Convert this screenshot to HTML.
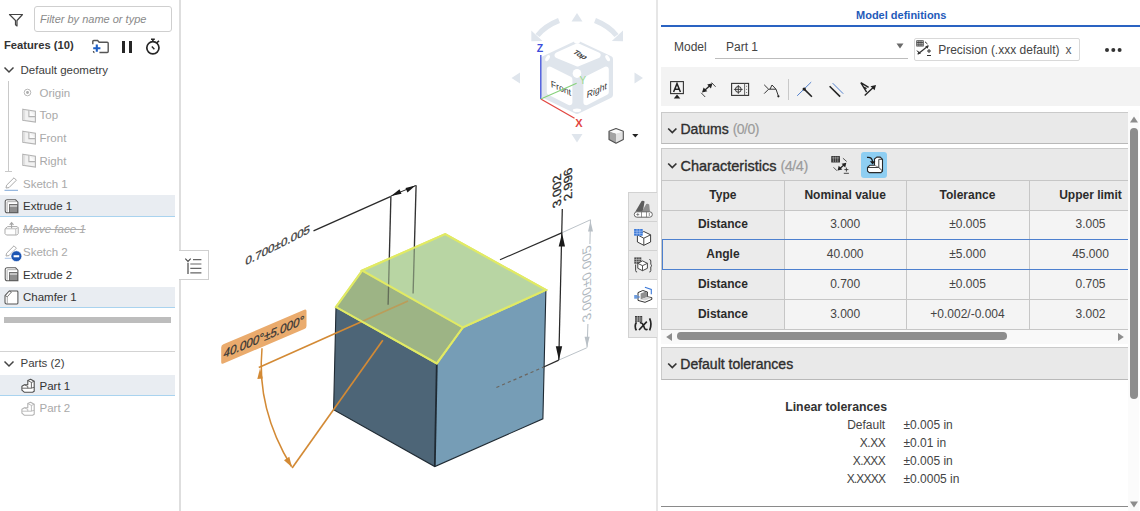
<!DOCTYPE html>
<html><head><meta charset="utf-8">
<style>
*{box-sizing:border-box}
html,body{margin:0;padding:0}
body{width:1140px;height:511px;position:relative;overflow:hidden;background:#fff;font-family:"Liberation Sans",sans-serif;color:#333}
.a{position:absolute}
.t{position:absolute;white-space:nowrap;line-height:1em}
.lp{font-size:11.5px}
.dis{color:#a9a9a9}
.hl{position:absolute;left:0;width:175px;background:#e9edf2;border-bottom:1px solid #a9d3ef}
svg{position:absolute;overflow:visible}
</style></head><body>

<!-- ============ VIEWPORT (full-page svg) ============ -->
<svg id="vp" class="a" style="left:0;top:0" width="1140" height="511" viewBox="0 0 1140 511">
<!-- model faces -->
<polygon points="336,307 436.8,363.4 434.8,466.6 333.6,409.8" fill="#4d6577"/>
<polygon points="436.8,363.4 462.8,327.5 545.9,290 542.9,418.8 434.8,466.6" fill="#769db6"/>
<polygon points="362.3,270.5 462.8,327.5 436.8,363.4 336,307" fill="#9db485"/>
<polygon points="362.3,270.5 445.2,234.1 545.9,290 462.8,327.5" fill="#b8d5a3"/>
<!-- dark edges -->
<polyline points="336,307 333.6,409.8 434.8,466.6 542.9,418.8 545.9,290" fill="none" stroke="#1f2a33" stroke-width="1.1"/>
<line x1="436.8" y1="363.4" x2="434.8" y2="466.6" stroke="#1f2a33" stroke-width="1.8"/>
<!-- yellow edges -->
<polygon points="362.3,270.5 445.2,234.1 545.9,290 462.8,327.5" fill="none" stroke="#e1ea64" stroke-width="2"/>
<polyline points="362.3,270.5 336,307 436.8,363.4 462.8,327.5" fill="none" stroke="#e1ea64" stroke-width="2"/>

<!-- 0.700 dimension -->
<line x1="313.5" y1="230.9" x2="390.4" y2="196.6" stroke="#2a2a2a" stroke-width="1.3"/>
<line x1="390.9" y1="196.3" x2="388.1" y2="304.8" stroke="#333" stroke-width="1.35"/>
<line x1="416.1" y1="185.3" x2="413.1" y2="293.6" stroke="#333" stroke-width="1.35"/>
<line x1="390.4" y1="196.3" x2="415.8" y2="185.5" stroke="#2a2a2a" stroke-width="1"/>
<polygon points="391,196 399.5,189.2 401.5,193.8" fill="#1a1a1a"/>
<polygon points="415.5,185.6 405.5,187.9 407.5,192.4" fill="#1a1a1a"/>
<text transform="matrix(0.91,-0.465,-0.06,0.9,245.2,265.6)" style="font-family:'Liberation Sans';font-size:12.8px;stroke:#3d3d3d;stroke-width:0.35px" fill="#3d3d3d">0.700±0.005</text>

<!-- 3.000 dimension (right) -->
<line x1="500" y1="259.8" x2="562.3" y2="232.6" stroke="#2a2a2a" stroke-width="1.2"/>
<line x1="562.3" y1="232.6" x2="590.7" y2="219.7" stroke="#bcc3c9" stroke-width="1"/>
<line x1="543.7" y1="367" x2="558.8" y2="360.1" stroke="#2a2a2a" stroke-width="1.3"/>
<line x1="558.8" y1="360.1" x2="586.8" y2="347.8" stroke="#bcc3c9" stroke-width="1"/>
<line x1="562.3" y1="209" x2="558.8" y2="360.1" stroke="#2a2a2a" stroke-width="1.25"/>
<polygon points="562.1,233.2 558.7,246.5 565,246.5" fill="#1a1a1a"/>
<polygon points="558.9,360 555.8,346.2 562.2,346.2" fill="#1a1a1a"/>
<line x1="496.4" y1="387.5" x2="543.7" y2="367" stroke="#6b6660" stroke-width="1.2" stroke-dasharray="3.2,3"/>
<text transform="matrix(0,-1,0.914,-0.407,561.2,205.6)" style="font-family:'Liberation Sans';font-size:13px;stroke:#2a2a2a;stroke-width:0.3px" fill="#2a2a2a">3.002</text>
<text transform="matrix(0,-1,0.914,-0.407,572,198.6)" style="font-family:'Liberation Sans';font-size:12.8px;stroke:#2a2a2a;stroke-width:0.3px" fill="#2a2a2a">2.996</text>
<!-- gray 3.000+-0.005 -->
<line x1="590.5" y1="220" x2="589.9" y2="244" stroke="#bcc3c9" stroke-width="1.1"/>
<line x1="587.9" y1="324" x2="587.1" y2="347.5" stroke="#bcc3c9" stroke-width="1.1"/>
<polygon points="590.5,221 588,231.5 593,231.5" fill="#b9c0c6"/>
<polygon points="587,347.2 584.6,336.8 589.6,336.8" fill="#b9c0c6"/>
<text transform="matrix(0,-1,0.914,-0.407,591,319.6)" style="font-family:'Liberation Sans';font-size:13.6px" fill="#b0b8c0">3.000±0.005</text>

<!-- angle dimension (orange) -->
<line x1="258.8" y1="367.4" x2="408" y2="301" stroke="#d38a35" stroke-width="1.65"/>
<line x1="292.1" y1="468" x2="382.8" y2="340.3" stroke="#d38a35" stroke-width="1.65"/>
<path d="M262,348.2 C259,380 263,420 291.5,466.5" fill="none" stroke="#d38a35" stroke-width="1.5"/>
<polygon points="260,368.6 257.3,379 262.9,378.6" fill="#d38a35"/>
<polygon points="292,467.3 289.3,456.8 284,460.2" fill="#d38a35"/>
<!-- face overlays (semi-transparent) -->
<polygon points="362.3,270.5 462.8,327.5 436.8,363.4 336,307" fill="#9db485" fill-opacity="0.45"/>
<polygon points="362.3,270.5 445.2,234.1 545.9,290 462.8,327.5" fill="#b8d5a3" fill-opacity="0.5"/>
<polygon points="362.3,270.5 445.2,234.1 545.9,290 462.8,327.5" fill="none" stroke="#e1ea64" stroke-width="2"/>
<polyline points="362.3,270.5 336,307 436.8,363.4 462.8,327.5" fill="none" stroke="#e1ea64" stroke-width="2"/>
<g transform="matrix(1,-0.4255,0,1,221.2,345.2)">
 <rect x="0" y="0" width="85.3" height="19.2" rx="2.2" fill="#eaab6d"/>
 <text x="2.4" y="13.9" style="font-family:'Liberation Sans';font-style:italic;font-size:12.2px;stroke:#3a3a3a;stroke-width:0.25px" fill="#333" textLength="80.5" lengthAdjust="spacingAndGlyphs">40.000°±5.000°</text>
</g>

<!-- view cube -->
<g fill="#dfe5ec">
 <polygon points="571.5,21.5 582.5,21.5 577,13"/>
 <polygon points="571.5,134 582.5,134 577,142.5"/>
 <polygon points="520,72.5 520,83.5 511.5,78"/>
 <polygon points="634.5,72.5 634.5,83.5 643,78"/>
</g>
<path d="M537.5,35.5 Q545,26 559,20.5" fill="none" stroke="#dfe5ec" stroke-width="5.2"/>
<polygon points="531.3,30.5 531.3,41.3 542.5,41" fill="#dfe5ec"/>
<path d="M616.5,35.5 Q609,26 595,20.5" fill="none" stroke="#dfe5ec" stroke-width="5.2"/>
<polygon points="623,30.5 623,41.3 611.8,41" fill="#dfe5ec"/>
<!-- cube body -->
<polygon points="577,43.5 610,59 610,95 577,111 544,95 544,59" fill="#dfe5ec" stroke="#dfe5ec" stroke-width="6" stroke-linejoin="round"/>
<polygon points="577.6,46.2 597.6,55.2 577.6,63.6 557.6,55.2" fill="#fff" stroke="#fff" stroke-width="6" stroke-linejoin="round"/>
<polygon points="549.8,69.6 569.4,79.4 569.4,102.2 549.8,92.2" fill="#fff" stroke="#fff" stroke-width="6" stroke-linejoin="round"/>
<polygon points="605.8,69.6 586.4,79.4 586.4,102.2 605.8,92.2" fill="#fff" stroke="#fff" stroke-width="6" stroke-linejoin="round"/>
<ellipse cx="577" cy="73.4" rx="4.3" ry="4.5" fill="#fff"/>
<ellipse cx="547.6" cy="58.2" rx="1.8" ry="3.4" transform="rotate(30 547.6 58.2)" fill="#fff"/>
<ellipse cx="607.6" cy="58.2" rx="1.8" ry="3.4" transform="rotate(-30 607.6 58.2)" fill="#fff"/>
<ellipse cx="577" cy="110.2" rx="4.2" ry="1.8" fill="#fff"/>
<ellipse cx="577" cy="41.8" rx="3" ry="1.8" fill="#fff"/>
<text transform="matrix(0.8,0.46,-0.66,0.4,572,52.5)" style="font-family:'Liberation Sans';font-size:9.5px;stroke:#333;stroke-width:0.3px" fill="#333">Top</text>
<text transform="matrix(0.9,0.4,0.05,1,551,87)" style="font-family:'Liberation Sans';font-size:9.6px" fill="#333">Front</text>
<text transform="matrix(0.9,-0.42,-0.08,1,586.5,98.3)" style="font-family:'Liberation Sans';font-size:9.6px" fill="#333">Right</text>
<!-- axes -->
<line x1="540.8" y1="99" x2="540.8" y2="55" stroke="#3c4ddb" stroke-width="1.3"/>
<line x1="540.8" y1="99" x2="574.5" y2="118.3" stroke="#e2453f" stroke-width="1.3"/>
<line x1="540.8" y1="99" x2="576.6" y2="83.3" stroke="#86d17a" stroke-width="1.1"/>
<text x="536.7" y="51.8" style="font-family:'Liberation Sans';font-size:10.5px;font-weight:bold" fill="#3c4ddb">Z</text>
<text x="575.3" y="127.3" style="font-family:'Liberation Sans';font-size:11px;font-weight:bold" fill="#e2453f">X</text>
<text x="579.5" y="84" style="font-family:'Liberation Sans';font-size:10px" fill="#9ad98f">Y</text>
<!-- small cube icon -->
<path d="M609,131.3 L616,133.4 V143.2 L609,139.4 Z" fill="#a3a3a3"/>
<path d="M616,133.4 L623.3,131.3 V139.4 L616,143.2 Z" fill="#e2e2e2"/>
<path d="M609,131.3 L616,128.6 L623.3,131.3 L616,133.4 Z" fill="#fafafa"/>
<path d="M609,131.3 L616,128.6 L623.3,131.3 V139.4 L616,143.2 L609,139.4 Z" fill="none" stroke="#505050" stroke-width="1.1" stroke-linejoin="round"/>
<polygon points="632.2,134 638.4,134 635.3,137.6" fill="#222"/>
</svg>

<!-- ============ LEFT PANEL ============ -->
<div class="a" style="left:0;top:0;width:181px;height:511px;border-right:2px solid #dedede;background:transparent"></div>

<!-- filter -->
<svg style="left:8px;top:12px" width="16" height="16" viewBox="0 0 16 16"><path d="M1.5 2.5 H14.5 L9 8.5 V14 L7.5 12.8 V8.5 Z" fill="none" stroke="#444" stroke-width="1.2" stroke-linejoin="round"/></svg>
<div class="a" style="left:34px;top:6px;width:138px;height:26px;border:1px solid #cfcfcf;border-radius:3px"></div>
<div class="t" style="left:40px;top:14.2px;font-size:11px;font-style:italic;color:#8a8a8a">Filter by name or type</div>

<div class="t" style="left:4px;top:39.7px;font-size:11.2px;font-weight:bold;color:#333">Features (10)</div>
<!-- header icons -->
<svg style="left:91px;top:39px" width="19" height="15" viewBox="0 0 19 15">
 <path d="M1.8 5.2 V2.5 Q1.8 1.5 2.8 1.5 H6.6 L8.2 3.3 H16.2 Q17.2 3.3 17.2 4.3 V12.5 Q17.2 13.5 16.2 13.5 H8.4" fill="none" stroke="#555" stroke-width="1.4"/>
 <path d="M2.5 12 V12.5 Q2.5 13.5 3.5 13.5" fill="none" stroke="#555" stroke-width="1.3"/>
 <path d="M5.8 5.6 V12.8 M2.2 9.2 H9.4" stroke="#1f5fc4" stroke-width="2.1"/>
</svg>
<div class="a" style="left:122px;top:40.7px;width:3px;height:12px;background:#262626"></div>
<div class="a" style="left:129px;top:40.7px;width:3.2px;height:12px;background:#262626"></div>
<svg style="left:144px;top:37px" width="18" height="18" viewBox="0 0 18 18">
 <circle cx="8.9" cy="10.8" r="6.1" fill="none" stroke="#262626" stroke-width="1.7"/>
 <path d="M7 2.2 H10.8 M8.9 2.2 V4.6" stroke="#262626" stroke-width="1.6"/><path d="M12.6 5.8 L15 3.8" stroke="#262626" stroke-width="1.5"/>
 <path d="M7.8 9.6 L10.4 12.2" stroke="#262626" stroke-width="1.4"/>
</svg>

<!-- Default geometry -->
<svg style="left:3px;top:65px" width="12" height="9" viewBox="0 0 12 9"><path d="M1.5 2.5 L6 7 L10.5 2.5" fill="none" stroke="#444" stroke-width="1.5"/></svg>
<div class="t lp" style="left:20.5px;top:64.8px;color:#3d3d3d">Default geometry</div>
<div class="a" style="left:8px;top:81px;width:1px;height:91px;background:#c9c9c9"></div>
<div class="a" style="left:5px;top:171px;width:7px;height:1px;background:#c9c9c9"></div>
<!-- origin -->
<svg style="left:23px;top:88px" width="9" height="9" viewBox="0 0 9 9"><circle cx="4.5" cy="4.5" r="3.3" fill="none" stroke="#b8b8b8" stroke-width="1"/><circle cx="4.5" cy="4.5" r="1.4" fill="#aaa"/></svg>
<div class="t lp dis" style="left:39.5px;top:87.5px">Origin</div>
<!-- planes -->
<svg style="left:21.5px;top:108.5px" width="15" height="14" viewBox="0 0 15 14"><path d="M0.8 0.2 L13.4 2.2 V13 L0.8 11.2 Z" fill="#f2f2f2" stroke="#b3b3b3" stroke-width="1.1"/><path d="M6.9 1.2 V7.6 H13.4" fill="#fbfbfb" stroke="#b3b3b3" stroke-width="1.1"/><path d="M2.6 0.8 V11.3" stroke="#d8d8d8" stroke-width="0.8"/></svg>
<div class="t lp dis" style="left:39.5px;top:110.3px">Top</div>
<svg style="left:21.5px;top:131.2px" width="15" height="14" viewBox="0 0 15 14"><path d="M0.8 0.2 L13.4 2.2 V13 L0.8 11.2 Z" fill="#f2f2f2" stroke="#b3b3b3" stroke-width="1.1"/><path d="M6.9 1.2 V7.6 H13.4" fill="#fbfbfb" stroke="#b3b3b3" stroke-width="1.1"/><path d="M2.6 0.8 V11.3" stroke="#d8d8d8" stroke-width="0.8"/></svg>
<div class="t lp dis" style="left:39.5px;top:133px">Front</div>
<svg style="left:21.5px;top:154px" width="15" height="14" viewBox="0 0 15 14"><path d="M0.8 0.2 L13.4 2.2 V13 L0.8 11.2 Z" fill="#f2f2f2" stroke="#b3b3b3" stroke-width="1.1"/><path d="M6.9 1.2 V7.6 H13.4" fill="#fbfbfb" stroke="#b3b3b3" stroke-width="1.1"/><path d="M2.6 0.8 V11.3" stroke="#d8d8d8" stroke-width="0.8"/></svg>
<div class="t lp dis" style="left:39.5px;top:155.8px">Right</div>
<!-- sketch 1 -->
<svg style="left:4px;top:176px" width="15" height="15" viewBox="0 0 15 15"><path d="M2 12 L2.6 9.2 L10 1.8 L12.4 4.2 L5 11.6 Z" fill="none" stroke="#aaa" stroke-width="1"/><path d="M0.5 14.3 H14" stroke="#7ea7d8" stroke-width="1"/></svg>
<div class="t lp dis" style="left:23px;top:178.5px">Sketch 1</div>
<!-- extrude 1 -->
<div class="hl" style="top:195px;height:22px"></div>
<svg style="left:4px;top:198.5px" width="15" height="15" viewBox="0 0 15 15"><path d="M1.2 2.8 Q1.2 0.8 3.2 0.8 H11.6 L13.9 3.1 V13.8 H3.6 Q1.2 13.8 1.2 11.4 Z" fill="#fff" stroke="#595959" stroke-width="1.05"/><path d="M3.1 12.8 V3.3 Q3.1 2.7 3.7 2.7 H12.5" fill="none" stroke="#9a9a9a" stroke-width="0.8"/><rect x="5.4" y="5.6" width="8.1" height="8" fill="#8e8e8e" stroke="#595959" stroke-width="0.8"/><rect x="5.8" y="6" width="7.3" height="2" fill="#c4c4c4"/></svg>
<div class="t lp" style="left:23px;top:201.3px">Extrude 1</div>
<!-- move face 1 -->
<svg style="left:4px;top:221px" width="15" height="15" viewBox="0 0 15 15"><path d="M1 7.8 L3.6 5.6 H13.2 L14.2 6.6 V12.6 L12.8 14 H2.4 L1 12.6 Z" fill="#fff" stroke="#ababab" stroke-width="1" stroke-linejoin="round"/><path d="M1 7.8 H11.8 L14.2 6.6 M11.8 7.8 V14" fill="none" stroke="#b5b5b5" stroke-width="0.9"/><path d="M7.6 7.2 V1.8 M5.7 3.8 L7.6 1.6 L9.5 3.8" fill="none" stroke="#a5a5a5" stroke-width="1.1"/></svg>
<div class="t lp dis" style="left:23px;top:224.2px;font-style:italic;text-decoration:line-through">Move face 1</div>
<!-- sketch 2 -->
<svg style="left:4px;top:244.2px" width="18" height="20" viewBox="0 0 18 20"><path d="M2 12 L2.6 9.2 L10 1.8 L12.4 4.2 L5 11.6 Z" fill="none" stroke="#aaa" stroke-width="1"/><path d="M0.8 14.3 H8" stroke="#a9c4e8" stroke-width="1"/><circle cx="12.4" cy="12.2" r="5.4" fill="#1d55b3" stroke="#fff" stroke-width="0.6"/><rect x="9.6" y="11.2" width="5.6" height="2.1" fill="#fff"/></svg>
<div class="t lp dis" style="left:23px;top:247px">Sketch 2</div>
<!-- extrude 2 -->
<svg style="left:4px;top:266.7px" width="15" height="15" viewBox="0 0 15 15"><path d="M1.2 2.8 Q1.2 0.8 3.2 0.8 H11.6 L13.9 3.1 V13.8 H3.6 Q1.2 13.8 1.2 11.4 Z" fill="#fff" stroke="#595959" stroke-width="1.05"/><path d="M3.1 12.8 V3.3 Q3.1 2.7 3.7 2.7 H12.5" fill="none" stroke="#9a9a9a" stroke-width="0.8"/><rect x="5.4" y="5.6" width="8.1" height="8" fill="#8e8e8e" stroke="#595959" stroke-width="0.8"/><rect x="5.8" y="6" width="7.3" height="2" fill="#c4c4c4"/></svg>
<div class="t lp" style="left:23px;top:269.5px">Extrude 2</div>
<!-- chamfer 1 -->
<div class="hl" style="top:286.5px;height:21.5px"></div>
<svg style="left:4px;top:289.5px" width="15" height="15" viewBox="0 0 15 15"><path d="M1 5.6 L5.2 1 H13 Q13.9 1 13.9 1.9 V13 Q13.9 13.9 13 13.9 H2.6 Q1 13.9 1 12.3 Z" fill="#fff" stroke="#555" stroke-width="1.05" stroke-linejoin="round"/><path d="M1.2 5.6 L3.3 6.8 L7.4 2.1 L5.2 1" fill="none" stroke="#666" stroke-width="0.9"/><path d="M3.3 6.8 V13.7" stroke="#888" stroke-width="0.7"/></svg>
<div class="t lp" style="left:23px;top:292.3px">Chamfer 1</div>
<!-- gray bar -->
<div class="a" style="left:4px;top:317px;width:166.5px;height:6px;background:#bdbdbd"></div>
<div class="a" style="left:0;top:351px;width:175px;height:1px;background:#d3d3d3"></div>
<!-- Parts -->
<svg style="left:3px;top:358.5px" width="12" height="9" viewBox="0 0 12 9"><path d="M1.5 2.5 L6 7 L10.5 2.5" fill="none" stroke="#444" stroke-width="1.5"/></svg>
<div class="t lp" style="left:20.5px;top:358.2px;color:#3d3d3d">Parts (2)</div>
<div class="hl" style="top:375px;height:21px"></div>
<svg style="left:21px;top:377.5px" width="15" height="15" viewBox="0 0 15 15"><path d="M6.8 2.6 L9.6 1.3 L13.2 3.3 V13.3 L11.6 14.2 H3.2 L0.9 12.2 V8.2 L3.4 6.8 H6.8 Z" fill="#fff" stroke="#505050" stroke-width="1.1" stroke-linejoin="round"/><path d="M6.8 2.6 L10.4 4.4 V10.2 H1.2 M10.4 4.4 L13.2 3.3 M10.4 10.2 L13.2 9.2 M3.4 6.8 L6.8 8.4 V10.2" fill="none" stroke="#505050" stroke-width="0.85"/></svg>
<div class="t lp" style="left:39.5px;top:380.6px">Part 1</div>
<svg style="left:21px;top:400.5px" width="15" height="15" viewBox="0 0 15 15"><path d="M6.8 2.6 L9.6 1.3 L13.2 3.3 V13.3 L11.6 14.2 H3.2 L0.9 12.2 V8.2 L3.4 6.8 H6.8 Z" fill="#fff" stroke="#b3b3b3" stroke-width="1.1" stroke-linejoin="round"/><path d="M6.8 2.6 L10.4 4.4 V10.2 H1.2 M10.4 4.4 L13.2 3.3 M10.4 10.2 L13.2 9.2 M3.4 6.8 L6.8 8.4 V10.2" fill="none" stroke="#b3b3b3" stroke-width="0.85"/></svg>
<div class="t lp dis" style="left:39.5px;top:403.3px">Part 2</div>

<!-- ============ RIGHT PANEL ============ -->
<div class="a" style="left:656px;top:0;width:484px;height:511px;background:#fff;border-left:2px solid #e6e6e6"></div>
<div class="t" style="left:856px;top:9.6px;font-size:11px;font-weight:bold;color:#1f5bba">Model definitions</div>
<div class="a" style="left:661px;top:25px;width:479px;height:2px;background:#2a63c2"></div>
<div class="t" style="left:674px;top:40.8px;font-size:12px;color:#444">Model</div>
<div class="t" style="left:726px;top:40.8px;font-size:12px;color:#444">Part 1</div>
<div class="a" style="left:715px;top:58px;width:193px;height:1px;background:#bdbdbd"></div>
<svg style="left:895.5px;top:43px" width="8" height="6" viewBox="0 0 8 6"><path d="M0.5 0.5 H7.5 L4 5.5 Z" fill="#6a6a6a"/></svg>
<div class="a" style="left:914px;top:38px;width:166px;height:22.5px;border:1px solid #d9d9d9;border-radius:2px"></div>
<svg id="chipicon" style="left:916px;top:40px" width="18" height="18" viewBox="0 0 18 18">
 <rect x="0.8" y="0.8" width="6.4" height="5.2" fill="none" stroke="#333" stroke-width="0.9"/>
 <path d="M0.8 2.5 H7.2 M0.8 4.2 H7.2 M2.9 0.8 V6 M5 0.8 V6" stroke="#333" stroke-width="0.8"/>
 <path d="M9 1.8 L11.5 4" stroke="#333" stroke-width="1"/>
 <path d="M2 14 L12 6" stroke="#333" stroke-width="1.2"/>
 <path d="M12.8 5.2 L9.2 6.2 L11.6 8.8 Z M1.4 14.6 L5 13.6 L2.6 11 Z" fill="#333"/>
 <path d="M1 10.5 L2.5 12.5 M13 9 V13 M11 11 H15 M11 15.5 H15" stroke="#333" stroke-width="1"/>
</svg>
<div class="t" style="left:938.2px;top:43.8px;font-size:12px;color:#444">Precision (.xxx default)</div>
<div class="t" style="left:1065.5px;top:43.8px;font-size:12px;color:#555">x</div>
<svg style="left:1104px;top:47px" width="20" height="6" viewBox="0 0 20 6"><circle cx="3" cy="3" r="2" fill="#333"/><circle cx="9.3" cy="3" r="2" fill="#333"/><circle cx="15.6" cy="3" r="2" fill="#333"/></svg>

<!-- toolbar -->
<div class="a" style="left:661px;top:67px;width:479px;height:39px;background:#f3f3f3"></div>
<svg style="left:0;top:0" width="1140" height="511" viewBox="0 0 1140 511">
 <!-- 1 annotation -->
 <rect x="670.6" y="81.6" width="12.8" height="12" fill="none" stroke="#333" stroke-width="1.1"/>
 <path d="M673.6,92 L677,83.6 L680.4,92 M674.6,89.3 H679.4" fill="none" stroke="#222" stroke-width="1.5"/>
 <polygon points="673.8,98.5 680.3,98.5 677,94.6" fill="#222"/>
 <!-- 2 dimension -->
 <line x1="703.3" y1="91.4" x2="711.2" y2="84.4" stroke="#222" stroke-width="1.3"/>
 <polygon points="712.5,83.2 707.2,84.6 710.9,88.4" fill="#222"/>
 <polygon points="702,92.6 707.3,91.2 703.6,87.4" fill="#222"/>
 <path d="M711.6,82.6 L715.6,86.8 M701.2,92.8 L705.2,97" stroke="#333" stroke-width="0.9"/>
 <!-- 3 datum box -->
 <rect x="731.6" y="83.4" width="17" height="12" fill="none" stroke="#333" stroke-width="1.1"/>
 <line x1="744.6" y1="83.4" x2="744.6" y2="95.4" stroke="#555" stroke-width="0.9"/>
 <circle cx="738.3" cy="89.4" r="2.9" fill="none" stroke="#333" stroke-width="1"/>
 <path d="M738.3,85 V93.8 M733.9,89.4 H742.7" stroke="#333" stroke-width="0.9"/>
 <path d="M746.6,85.8 V86.8 M746.6,88.9 V89.9 M746.6,92 V93" stroke="#666" stroke-width="0.9"/>
 <!-- 4 angle/profile -->
 <path d="M764.2,84.8 L768.6,89.2 L764.2,93.6 M768.6,89.2 L770,89.2 L772,85 L776,89.2 H770" fill="none" stroke="#333" stroke-width="1"/>
 <path d="M776,89.2 L778.3,95.8" fill="none" stroke="#333" stroke-width="1"/>
 <circle cx="778.4" cy="96.3" r="1.1" fill="#222"/>
 <!-- 6 perpendicular -->
 <line x1="797.2" y1="95.8" x2="811.2" y2="82.1" stroke="#3f73c8" stroke-width="0.9"/>
 <line x1="804.2" y1="89.1" x2="811.9" y2="96.8" stroke="#222" stroke-width="1.6"/>
 <circle cx="804.2" cy="89.1" r="1.7" fill="#222"/>
 <!-- 7 parallel -->
 <line x1="829.6" y1="86.3" x2="840.1" y2="96.6" stroke="#222" stroke-width="1.6"/>
 <line x1="832.7" y1="83.2" x2="843.2" y2="93.7" stroke="#3f73c8" stroke-width="0.9"/>
 <!-- 8 angularity -->
 <path d="M860.8,82.6 L866.6,92.2 M860.8,82.6 L868.6,87.4 M863.6,87 L866.6,88.6" fill="none" stroke="#222" stroke-width="1.4"/>
 <line x1="864.7" y1="95.6" x2="874" y2="86.8" stroke="#222" stroke-width="1.4"/>
 <polygon points="876,85 870.5,86.3 874.6,90.2" fill="#222"/>
</svg>
<!-- viewport right toolbar -->
<div class="a" style="left:628px;top:192px;width:29px;height:146px;background:#ebebeb;border:1px solid #d2d2d2;border-right:none"></div>
<div class="a" style="left:628px;top:221px;width:29px;height:1px;background:#d2d2d2"></div>
<div class="a" style="left:628px;top:250px;width:29px;height:1px;background:#d2d2d2"></div>
<div class="a" style="left:628px;top:279px;width:29px;height:29.5px;background:#fff;border:1px solid #d2d2d2;border-right:none"></div>
<svg style="left:0;top:0" width="1140" height="511" viewBox="0 0 1140 511">
 <!-- b1 appearance -->
 <path d="M635.3,211.8 L641.6,201 Q643.2,200.2 644.6,201.4 L642.8,211.8 Z" fill="#5c5c5c"/>
 <path d="M641.8,211.8 L646.2,204 Q647.8,203.2 649.2,204.5 L650,211.8 Z" fill="#8e8e8e"/>
 <rect x="634.3" y="211.8" width="18" height="5.4" rx="2.6" fill="#fff" stroke="#555" stroke-width="0.9"/>
 <path d="M636.3,214.5 H639.3 M637.8,213 V216 M641.5,211.8 V217.2 M646.5,211.8 V217.2 M649.3,213 V216" stroke="#666" stroke-width="0.7"/>
 <!-- b2 -->
 <path d="M637.4,234.8 L643.8,231.5 L650.6,234.8 V242 L643.8,245.3 L637.4,242 Z" fill="#fff" stroke="#333" stroke-width="0.95" stroke-linejoin="round"/>
 <path d="M637.4,234.8 L643.8,238.2 L650.6,234.8 M643.8,238.2 V245.3" fill="none" stroke="#333" stroke-width="0.9"/>
 <rect x="634.1" y="229" width="8.6" height="6.7" fill="#3a78d8"/>
 <path d="M634.1,231.2 H642.7 M634.1,233.4 H642.7 M637,229 V235.7 M639.8,229 V235.7" stroke="#b8d0f5" stroke-width="0.6"/>
 <!-- b3 -->
 <rect x="634.3" y="257.4" width="7" height="6.3" fill="#4a4a4a"/>
 <path d="M634.3,259.5 H641.3 M634.3,261.6 H641.3 M636.6,257.4 V263.7 M639,257.4 V263.7" stroke="#cfcfcf" stroke-width="0.55"/>
 <path d="M637.8,263.3 L642.5,260.9 L647.4,263.3 V268.3 L642.5,270.7 L637.8,268.3 Z" fill="#fff" stroke="#333" stroke-width="0.9" stroke-linejoin="round"/>
 <path d="M637.8,263.3 L642.5,265.7 L647.4,263.3 M642.5,265.7 V270.7" fill="none" stroke="#333" stroke-width="0.85"/>
 <path d="M649.3,259.5 Q650.8,259.5 650.8,261 V264.5 L652,265.6 L650.8,266.7 V270.5 Q650.8,272 649.3,272" fill="none" stroke="#333" stroke-width="0.9"/>
 <path d="M635.6,264.5 V270.5 Q635.6,272 637.1,272" fill="none" stroke="#333" stroke-width="0.9"/>
 <!-- b4 -->
 <path d="M638,292.6 L642.8,290.5 L647.5,292 V296.8 L651.8,297.6 V299.4 L645,302.3 L638,300.4 Z" fill="#fff" stroke="#333" stroke-width="1" stroke-linejoin="round"/>
 <path d="M640.6,293.4 L645,291.7 L647.3,292.6 V297 L640.6,299.4 Z" fill="#8f8f8f"/>
 <path d="M640.6,299.4 L647.3,297 L651.4,297.9 L645,300.6 Z" fill="#d2d2d2"/>
 <path d="M644.9,287.3 L651.3,289.4 V294.3" fill="none" stroke="#3a78d8" stroke-width="1.1"/>
 <rect x="634.2" y="295" width="3.2" height="3.7" fill="#6d9de0"/>
 <path d="M637.4,297 H639.8" stroke="#3a78d8" stroke-width="1"/>
 <!-- b5 -->
 <rect x="635" y="316" width="7.2" height="5.8" fill="#3a3a3a"/>
 <path d="M635,318 H642.2 M635,320 H642.2 M637.4,316 V321.8 M639.8,316 V321.8" stroke="#d5d5d5" stroke-width="0.55"/>
 <path d="M636.4,322.2 Q634,326.2 636.4,330.4 M649.6,318.4 Q652.3,324.3 649.6,330.4" fill="none" stroke="#222" stroke-width="1.7"/>
 <path d="M639,330 L646.8,321.6 M639.8,322.8 Q642.2,322.4 643.4,325.4 L644.6,328.4 Q645.5,330.2 647.6,329.2" fill="none" stroke="#222" stroke-width="1.6"/>
</svg>

<div class="a" style="left:788px;top:79px;width:1px;height:21px;background:#c8c8c8"></div>

<!-- vertical scrollbar -->
<div class="a" style="left:1128px;top:110px;width:11px;height:401px;background:#fbfbfb"></div>
<svg style="left:1129px;top:115px" width="10" height="9" viewBox="0 0 10 9"><path d="M1 7.5 H9 L5 1.5 Z" fill="#8d8d8d"/></svg>
<div class="a" style="left:1130px;top:128px;width:8px;height:271px;background:#8d8d8d;border-radius:4px"></div>
<svg style="left:1129px;top:500px" width="10" height="9" viewBox="0 0 10 9"><path d="M1 1.5 H9 L5 7.5 Z" fill="#8d8d8d"/></svg>

<!-- Datums -->
<div class="a" style="left:661px;top:112px;width:467px;height:32px;background:#e9e9e9;border:1px solid #cacaca;border-right:none;border-bottom-color:#b9b9b9"></div>
<svg style="left:666.5px;top:126.5px" width="11" height="8" viewBox="0 0 11 8"><path d="M1.2 1.5 L5.3 5.6 L9.4 1.5" fill="none" stroke="#333" stroke-width="1.7"/></svg>
<div class="t" style="left:680.5px;top:122px;font-size:14px;color:#2e2e2e;-webkit-text-stroke:0.35px #2e2e2e">Datums <span style="color:#9c9c9c;-webkit-text-stroke:0.2px #9c9c9c;letter-spacing:-0.5px">(0/0)</span></div>

<!-- Characteristics -->
<div class="a" style="left:661px;top:148px;width:467px;height:32.5px;background:#e9e9e9;border:1px solid #cacaca;border-right:none;border-bottom:none"></div>
<svg style="left:666.5px;top:162px" width="11" height="8" viewBox="0 0 11 8"><path d="M1.2 1.5 L5.3 5.6 L9.4 1.5" fill="none" stroke="#333" stroke-width="1.7"/></svg>
<div class="t" style="left:680.5px;top:158.6px;font-size:14.5px;color:#2e2e2e;-webkit-text-stroke:0.35px #2e2e2e">Characteristics <span style="color:#9c9c9c;-webkit-text-stroke:0.2px #9c9c9c;letter-spacing:-0.5px">(4/4)</span></div>
<svg style="left:0;top:0" width="1140" height="511" viewBox="0 0 1140 511">
 <rect x="831.2" y="155.9" width="8.8" height="6.7" rx="0.6" fill="#3a3a3a"/>
 <path d="M833.4,156.6 V162 M835.6,156.6 V162 M837.8,156.6 V162 M831.8,157.9 H839.4" stroke="#bdbdbd" stroke-width="0.55"/>
 <path d="M842.9,158.2 L846.7,161.5 M833.5,167.3 L837,170.8" stroke="#444" stroke-width="0.9"/>
 <line x1="839.3" y1="169" x2="844.8" y2="164.2" stroke="#222" stroke-width="1.2"/>
 <polygon points="846.3,162.8 841.6,163.8 845.2,167.4" fill="#222"/>
 <polygon points="837.6,170.4 842.3,169.4 838.7,165.8" fill="#222"/>
 <path d="M846.4,167.6 V171.6 M844.4,169.6 H848.4 M843.8,173.3 H848.9" stroke="#333" stroke-width="0.9"/>
</svg>
<div class="a" style="left:861px;top:152px;width:26px;height:25.8px;background:#8ecef2;border-radius:3px"></div>
<svg style="left:0;top:0" width="1140" height="511" viewBox="0 0 1140 511">
 <path d="M867.5,167.5 L870,165.2 H874.5 V159 L876.8,157.1 H880.3 L882.5,159.3 V171 L881,172.6 H869.2 L867.5,171 Z" fill="#fff" stroke="#2a2a2a" stroke-width="1.1" stroke-linejoin="round"/>
 <path d="M867.5,167.5 H878.8 V159.3 H882.5 M878.8,167.5 L882.5,171" fill="none" stroke="#2a2a2a" stroke-width="0.9"/>
 <path d="M874.5,165.2 L878.8,167.5" fill="none" stroke="#555" stroke-width="0.7"/>
 <path d="M867,157.4 Q872.5,156.5 872.6,162.5" fill="none" stroke="#1e1e1e" stroke-width="1.3"/>
 <polygon points="869.8,161.2 875.4,161.2 872.6,164.6" fill="#1e1e1e"/>
</svg>

<!-- table -->
<!--table-->
<div class="a" style="left:661px;top:180px;width:467px;height:150px;overflow:hidden">
<div class="a" style="left:0.5px;top:0.0px;width:122.8px;height:30.5px;background:#ebebeb"></div>
<div class="a" style="left:123.3px;top:0.0px;width:121.7px;height:30.5px;background:#ebebeb"></div>
<div class="a" style="left:245.0px;top:0.0px;width:123.0px;height:30.5px;background:#ebebeb"></div>
<div class="a" style="left:368.0px;top:0.0px;width:123.0px;height:30.5px;background:#ebebeb"></div>
<div class="a" style="left:0.5px;top:30.5px;width:122.8px;height:29.0px;background:#ebebeb"></div>
<div class="a" style="left:123.3px;top:30.5px;width:121.7px;height:29.0px;background:#f4f4f4"></div>
<div class="a" style="left:245.0px;top:30.5px;width:123.0px;height:29.0px;background:#f4f4f4"></div>
<div class="a" style="left:368.0px;top:30.5px;width:123.0px;height:29.0px;background:#f4f4f4"></div>
<div class="a" style="left:0.5px;top:59.5px;width:122.8px;height:29.5px;background:#ebebeb"></div>
<div class="a" style="left:123.3px;top:59.5px;width:121.7px;height:29.5px;background:#f4f4f4"></div>
<div class="a" style="left:245.0px;top:59.5px;width:123.0px;height:29.5px;background:#f4f4f4"></div>
<div class="a" style="left:368.0px;top:59.5px;width:123.0px;height:29.5px;background:#f4f4f4"></div>
<div class="a" style="left:0.5px;top:89.0px;width:122.8px;height:30.0px;background:#ebebeb"></div>
<div class="a" style="left:123.3px;top:89.0px;width:121.7px;height:30.0px;background:#f4f4f4"></div>
<div class="a" style="left:245.0px;top:89.0px;width:123.0px;height:30.0px;background:#f4f4f4"></div>
<div class="a" style="left:368.0px;top:89.0px;width:123.0px;height:30.0px;background:#f4f4f4"></div>
<div class="a" style="left:0.5px;top:119.0px;width:122.8px;height:30.5px;background:#ebebeb"></div>
<div class="a" style="left:123.3px;top:119.0px;width:121.7px;height:30.5px;background:#f4f4f4"></div>
<div class="a" style="left:245.0px;top:119.0px;width:123.0px;height:30.5px;background:#f4f4f4"></div>
<div class="a" style="left:368.0px;top:119.0px;width:123.0px;height:30.5px;background:#f4f4f4"></div>
<div class="a" style="left:122.8px;top:0;width:1px;height:150px;background:#c6c6c6"></div>
<div class="a" style="left:244.5px;top:0;width:1px;height:150px;background:#c6c6c6"></div>
<div class="a" style="left:367.5px;top:0;width:1px;height:150px;background:#c6c6c6"></div>
<div class="a" style="left:0;top:30.0px;width:467px;height:1px;background:#c6c6c6"></div>
<div class="a" style="left:0;top:59.0px;width:467px;height:1px;background:#c6c6c6"></div>
<div class="a" style="left:0;top:88.5px;width:467px;height:1px;background:#c6c6c6"></div>
<div class="a" style="left:0;top:118.5px;width:467px;height:1px;background:#c6c6c6"></div>
<div class="a" style="left:0;top:149.0px;width:467px;height:1px;background:#c6c6c6"></div>
<div class="a" style="left:0;top:0;width:467px;height:1px;background:#c6c6c6"></div>
<div class="a" style="left:0;top:0;width:1px;height:150px;background:#c6c6c6"></div>
<div class="a" style="left:0.5px;top:59.0px;width:467px;height:30.5px;border:1px solid #4d80cf;border-right:none"></div>
<div class="t" style="left:0.5px;width:122.8px;text-align:center;top:8.84px;font-size:12px;font-weight:bold;color:#2b2b2b">Type</div>
<div class="t" style="left:123.3px;width:121.7px;text-align:center;top:8.84px;font-size:12px;font-weight:bold;color:#2b2b2b">Nominal value</div>
<div class="t" style="left:245.0px;width:123.0px;text-align:center;top:8.84px;font-size:12px;font-weight:bold;color:#2b2b2b">Tolerance</div>
<div class="t" style="left:368.0px;width:123.0px;text-align:center;top:8.84px;font-size:12px;font-weight:bold;color:#2b2b2b">Upper limit</div>
<div class="t" style="left:0.5px;width:122.8px;text-align:center;top:37.94px;font-size:12px;font-weight:bold;color:#2b2b2b">Distance</div>
<div class="t" style="left:123.3px;width:121.7px;text-align:center;top:37.94px;font-size:12px;font-weight:normal;color:#444">3.000</div>
<div class="t" style="left:245.0px;width:123.0px;text-align:center;top:37.94px;font-size:12px;font-weight:normal;color:#444">±0.005</div>
<div class="t" style="left:368.0px;width:123.0px;text-align:center;top:37.94px;font-size:12px;font-weight:normal;color:#444">3.005</div>
<div class="t" style="left:0.5px;width:122.8px;text-align:center;top:68.14px;font-size:12px;font-weight:bold;color:#2b2b2b">Angle</div>
<div class="t" style="left:123.3px;width:121.7px;text-align:center;top:68.14px;font-size:12px;font-weight:normal;color:#444">40.000</div>
<div class="t" style="left:245.0px;width:123.0px;text-align:center;top:68.14px;font-size:12px;font-weight:normal;color:#444">±5.000</div>
<div class="t" style="left:368.0px;width:123.0px;text-align:center;top:68.14px;font-size:12px;font-weight:normal;color:#444">45.000</div>
<div class="t" style="left:0.5px;width:122.8px;text-align:center;top:97.84px;font-size:12px;font-weight:bold;color:#2b2b2b">Distance</div>
<div class="t" style="left:123.3px;width:121.7px;text-align:center;top:97.84px;font-size:12px;font-weight:normal;color:#444">0.700</div>
<div class="t" style="left:245.0px;width:123.0px;text-align:center;top:97.84px;font-size:12px;font-weight:normal;color:#444">±0.005</div>
<div class="t" style="left:368.0px;width:123.0px;text-align:center;top:97.84px;font-size:12px;font-weight:normal;color:#444">0.705</div>
<div class="t" style="left:0.5px;width:122.8px;text-align:center;top:127.84px;font-size:12px;font-weight:bold;color:#2b2b2b">Distance</div>
<div class="t" style="left:123.3px;width:121.7px;text-align:center;top:127.84px;font-size:12px;font-weight:normal;color:#444">3.000</div>
<div class="t" style="left:245.0px;width:123.0px;text-align:center;top:127.84px;font-size:12px;font-weight:normal;color:#444">+0.002/-0.004</div>
<div class="t" style="left:368.0px;width:123.0px;text-align:center;top:127.84px;font-size:12px;font-weight:normal;color:#444">3.002</div>
</div>

<!-- horizontal scrollbar -->
<div class="a" style="left:661px;top:330px;width:467px;height:13.5px;background:#f9f9f9"></div>
<svg style="left:664.5px;top:332px" width="8" height="10" viewBox="0 0 8 10"><path d="M7 1 V9 L1.2 5 Z" fill="#8d8d8d"/></svg>
<div class="a" style="left:677px;top:332.3px;width:330px;height:7.6px;background:#8d8d8d;border-radius:3.8px"></div>
<svg style="left:1116.5px;top:332px" width="8" height="10" viewBox="0 0 8 10"><path d="M1 1 V9 L6.8 5 Z" fill="#8d8d8d"/></svg>

<!-- Default tolerances -->
<div class="a" style="left:661px;top:347px;width:467px;height:32.5px;background:#e9e9e9;border:1px solid #cacaca;border-right:none;border-bottom-color:#b9b9b9"></div>
<svg style="left:666.5px;top:361.5px" width="11" height="8" viewBox="0 0 11 8"><path d="M1.2 1.5 L5.3 5.6 L9.4 1.5" fill="none" stroke="#333" stroke-width="1.7"/></svg>
<div class="t" style="left:680.3px;top:356.7px;font-size:14px;color:#2e2e2e;-webkit-text-stroke:0.35px #2e2e2e">Default tolerances</div>

<div class="t" style="left:785.2px;width:100px;text-align:right;top:400.7px;font-size:12.3px;font-weight:bold;color:#333">Linear tolerances</div>
<div class="t" style="left:785.2px;width:100px;text-align:right;top:418.6px;font-size:12px;color:#444">Default</div>
<div class="t" style="left:785.2px;width:100px;text-align:right;top:436.8px;font-size:12px;color:#444;letter-spacing:-0.5px">X.XX</div>
<div class="t" style="left:785.2px;width:100px;text-align:right;top:455.1px;font-size:12px;color:#444;letter-spacing:-0.6px">X.XXX</div>
<div class="t" style="left:785.2px;width:100px;text-align:right;top:473.3px;font-size:12px;color:#444;letter-spacing:-0.8px">X.XXXX</div>
<div class="t" style="left:903.5px;top:418.6px;font-size:12px;color:#444">±0.005 in</div>
<div class="t" style="left:903.5px;top:436.8px;font-size:12px;color:#444">±0.01 in</div>
<div class="t" style="left:903.5px;top:455.1px;font-size:12px;color:#444">±0.005 in</div>
<div class="t" style="left:903.5px;top:473.3px;font-size:12px;color:#444">±0.0005 in</div>
<div class="a" style="left:661px;top:506px;width:467px;height:1px;background:#8a8a8a"></div>

<!-- tab on left panel edge -->
<div class="a" style="left:179px;top:249.8px;width:29.5px;height:29.8px;background:#fff;border:1px solid #cfcfcf;border-left:none"></div>
<svg style="left:0;top:0" width="1140" height="511" viewBox="0 0 1140 511">
 <path d="M185.3,258.6 L188,261.4 L190.7,258.6" fill="none" stroke="#444" stroke-width="1.1"/>
 <path d="M188,262.8 V274" stroke="#555" stroke-width="1.3"/>
 <path d="M193,259.6 H201.4 M190.3,264 H201.4 M190.3,268.4 H201.4 M190.3,272.9 H201.4" stroke="#666" stroke-width="1.2"/>
</svg>

</body></html>
